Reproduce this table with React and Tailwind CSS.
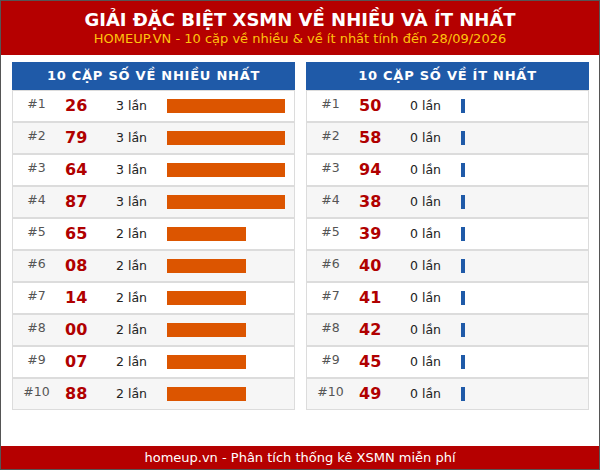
import React from "react";

const most = [
  ["#1", "26", 3], ["#2", "79", 3], ["#3", "64", 3], ["#4", "87", 3], ["#5", "65", 2],
  ["#6", "08", 2], ["#7", "14", 2], ["#8", "00", 2], ["#9", "07", 2], ["#10", "88", 2],
];
const least = [
  ["#1", "50", 0], ["#2", "58", 0], ["#3", "94", 0], ["#4", "38", 0], ["#5", "39", 0],
  ["#6", "40", 0], ["#7", "41", 0], ["#8", "42", 0], ["#9", "45", 0], ["#10", "49", 0],
];

function Panel({ title, rows, max, color }) {
  return (
    <div className="flex flex-col">
      <div className="h-[28px] bg-[#1f5aa8] text-white font-bold text-[13px] flex items-center justify-center tracking-[0.75px]">
        {title}
      </div>
      {rows.map(([rank, num, cnt], i) => (
        <div
          key={rank}
          className={
            "h-[32px] border border-[#dcdcdc] flex items-center " +
            (i % 2 === 1 ? "bg-[#f6f6f6]" : "bg-white")
          }
        >
          <div className="w-[47px] text-center text-[12.5px] text-[#555] -mt-[3px]">{rank}</div>
          <div className="w-[56px] pl-[5px] text-[16px] font-bold text-[#b00000]">{num}</div>
          <div className="w-[51px] text-[12.5px] text-[#222]">{cnt} lần</div>
          <div className="flex-1 pr-[9px] flex items-center">
            <div
              className={"h-[14px] " + color}
              style={{ width: max ? `${(cnt / max) * 100}%` : "4px", minWidth: "4px" }}
            />
          </div>
        </div>
      ))}
    </div>
  );
}

export default function App() {
  return (
    <div
      className="w-[600px] h-[470px] border border-[#555] flex flex-col bg-white overflow-hidden"
      style={{ fontFamily: '"DejaVu Sans", Verdana, sans-serif' }}
    >
      <div className="h-[54px] bg-[#b50000] flex flex-col items-center justify-center">
        <div className="text-white font-bold text-[18px] leading-[22px]">
          GIẢI ĐẶC BIỆT XSMN VỀ NHIỀU VÀ ÍT NHẤT
        </div>
        <div className="text-[#ffc20e] text-[13px] leading-[16px]">
          HOMEUP.VN - 10 cặp về nhiều &amp; về ít nhất tính đến 28/09/2026
        </div>
      </div>
      <div className="flex-1 grid grid-cols-2 gap-[11px] pl-[11px] pr-[10px] pt-[7px] items-start">
        <Panel title="10 CẶP SỐ VỀ NHIỀU NHẤT" rows={most} max={3} color="bg-[#dc5500]" />
        <Panel title="10 CẶP SỐ VỀ ÍT NHẤT" rows={least} max={0} color="bg-[#1f5aa8]" />
      </div>
      <div className="h-[23px] bg-[#b50000] text-white text-[13px] flex items-center justify-center">
        homeup.vn - Phân tích thống kê XSMN miễn phí
      </div>
    </div>
  );
}
